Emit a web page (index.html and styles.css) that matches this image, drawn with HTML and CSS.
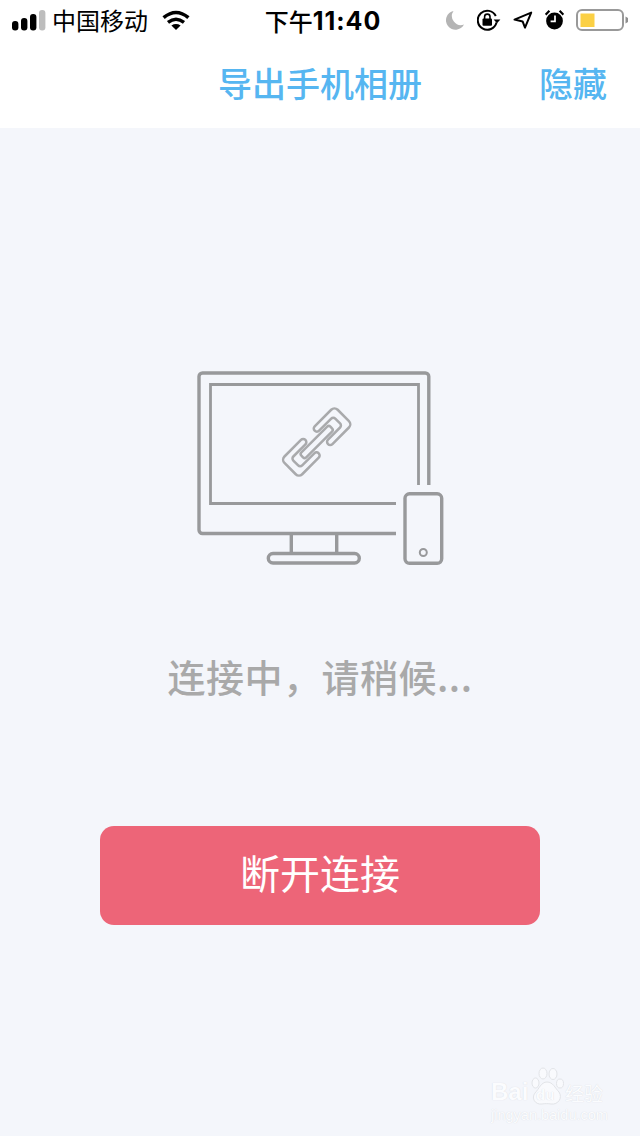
FILE: index.html
```html
<!DOCTYPE html>
<html lang="zh-CN">
<head>
<meta charset="utf-8">
<title>导出手机相册</title>
<link rel="stylesheet" href="styles.css">
</head>
<body>
<div class="screen">
  <header class="top">
    <div class="status">
      <div class="status-left">
        <svg class="ico-signal" width="34" height="21" viewBox="0 0 34 21">
          <rect x="0" y="11" width="6.4" height="9.500" rx="3" fill="#000"/>
          <rect x="9" y="8" width="6.4" height="12.500" rx="3" fill="#000"/>
          <rect x="18" y="4" width="6.4" height="16.500" rx="3" fill="#000"/>
          <rect x="27" y="0" width="6.4" height="20.500" rx="3" fill="#bdbdbd"/>
        </svg>
        <span class="carrier">中国移动</span>
        <svg class="ico-wifi" width="28" height="20" viewBox="0 0 28 20">
          <path d="M1.600 7.600Q14-2.600 26.400 7.600" fill="none" stroke="#000" stroke-width="3.600"/>
          <path d="M6 12.400Q14 6 22 12.400" fill="none" stroke="#000" stroke-width="3.400"/>
          <path d="M9.400 15.400Q14 12.600 18.600 15.400L14 20Z" fill="#000"/>
        </svg>
      </div>
      <div class="time"><span class="time-cjk">下午</span><span class="time-num">11:40</span></div>
      <div class="status-right">
        <svg width="19" height="20" viewBox="0 0 19 20">
          <path d="M7.500 1A9.500 9.500 0 1 0 18 14.500 9 9 0 0 1 7.500 1Z" fill="#b4b4b4"/>
        </svg>
        <svg width="24" height="22" viewBox="0 0 24 22">
          <path d="M19.500 13.500A9.500 9.500 0 1 1 18.800 7" fill="none" stroke="#000" stroke-width="2"/>
          <path d="M16.600 10.400h6.800l-3.400 3.800Z" fill="#000"/>
          <rect x="5.500" y="9.400" width="9.500" height="7.400" rx="1" fill="#000"/>
          <path d="M7.600 10V7.800a2.700 2.700 0 0 1 5.400 0V10" fill="none" stroke="#000" stroke-width="1.600"/>
        </svg>
        <svg width="20" height="18" viewBox="0 0 20 18">
          <path d="M1.500 8.600L18.200 1.600 12 16.600 9.600 10.400Z" fill="none" stroke="#000" stroke-width="2" stroke-linejoin="round"/>
        </svg>
        <svg width="19" height="20" viewBox="0 0 19 20">
          <circle cx="9.500" cy="11" r="8.400" fill="#000"/>
          <path d="M0.600 4.600L4.400 0.800M18.400 4.600L14.600 0.800" stroke="#000" stroke-width="2.200"/>
          <path d="M10 5.600V11.400H5.600" fill="none" stroke="#fff" stroke-width="1.700"/>
        </svg>
        <svg width="52" height="22" viewBox="0 0 52 22">
          <rect x="1" y="1" width="46" height="20" rx="5" fill="none" stroke="#999" stroke-width="2"/>
          <rect x="4.500" y="4.500" width="14" height="13.500" fill="#fbd044"/>
          <path d="M49.500 7.500L52 9V13L49.500 14.500Z" fill="#8f8f8f"/>
        </svg>
      </div>
    </div>
    <nav class="nav">
      <span></span>
      <h1 class="title">导出手机相册</h1>
      <a class="hide">隐藏</a>
    </nav>
  </header>
  <main class="main">
    <svg class="illus" width="248" height="196" viewBox="197 370 248 196">
      <g fill="none" stroke="#98999b" stroke-width="3.400">
        <path d="M428.800 485V376.500a3.500 3.500 0 0 0-3.500-3.500H202.500a3.500 3.500 0 0 0-3.500 3.500V530a3.500 3.500 0 0 0 3.500 3.500H396"/>
        <path d="M418.500 485V384.500H210.500V503.500H396" stroke-width="2.800"/>
        <path d="M291.300 534V552M336.700 534V552"/>
        <rect x="268.300" y="553.500" width="91" height="9.500" rx="4.700"/>
        <rect x="405" y="493.800" width="36.700" height="69.500" rx="4.500"/>
        <circle cx="423.300" cy="552.500" r="3.500" stroke-width="2"/>
      </g>
      <g transform="translate(316.700 442) rotate(-45) scale(1.140)" fill="none" stroke="#a9aaac" stroke-width="2.200">
        <path d="M8.500-11H29a4 4 0 0 1 4 4V7a4 4 0 0 1-4 4H8.500a2.700 2.700 0 0 1 0-5.500H23.500a2.500 2.500 0 0 0 2.500-2.500V-3a2.500 2.500 0 0 0-2.500-2.500H8.500a2.700 2.700 0 0 1 0-5.500Z"/>
        <path d="M-8.500 11H-29a4 4 0 0 1-4-4V-7a4 4 0 0 1 4-4H-8.500a2.700 2.700 0 0 1 0 5.500H-23.500a2.500 2.500 0 0 0-2.500 2.500V3a2.500 2.500 0 0 0 2.500 2.500H-8.500a2.700 2.700 0 0 1 0 5.500Z"/>
        <rect x="-18" y="-3" width="36" height="6" rx="2"/>
      </g>
    </svg>
    <p class="hint">连接中，请稍候...</p>
    <button class="disconnect" type="button">断开连接</button>
  </main>
  <div class="watermark">
    <div class="wm-row">
      <span class="wm-bai">Bai</span>
      <span class="wm-paw">
        <svg width="34" height="40" viewBox="0 0 34 40">
          <g fill="#f9fafd" stroke="#e2e4e8" stroke-width="1">
            <ellipse cx="5.500" cy="16" rx="3.500" ry="5"/>
            <ellipse cx="13" cy="6.500" rx="4" ry="5.500"/>
            <ellipse cx="23" cy="7" rx="4" ry="5.500"/>
            <ellipse cx="30" cy="16.500" rx="3.500" ry="4.500"/>
            <path d="M17 15C23 15 25 21 29 25 33 31 28 38 21 37 18 36.500 15 36.500 12 37 5 38 1 31 5 26 9 22 11 15 17 15Z"/>
          </g>
        </svg>
        <span class="wm-du">du</span>
      </span>
      <span class="wm-jy">经验</span>
    </div>
    <div class="wm-url">jingyan.baidu.com</div>
  </div>
</div>
</body>
</html>
```
FILE: styles.css
```css
* { box-sizing: border-box; }
html, body { margin: 0; padding: 0; }
body { font-family: "Noto Sans CJK SC", "Noto Sans", sans-serif; background: #f4f6fb; }
.screen { position: relative; width: 640px; height: 1136px; overflow: hidden; background: #f4f6fb; }
.top { background: #fff; height: 128px; }
.status { display: grid; grid-template-columns: 1fr auto 1fr; align-items: center; height: 40px; color: #000; }
.status-left { display: flex; align-items: center; padding-left: 12px; }
.carrier { font-size: 24px; line-height: 30px; margin-left: 6px; }
.ico-wifi { margin-left: 14px; }
.time { display: flex; align-items: center; padding-top: 1px; padding-left: 6px; line-height: 30px; }
.time-cjk { font-size: 24px; font-weight: 500; }
.time-num { font-family: "Inter", "Liberation Sans", sans-serif; font-size: 25px; font-weight: 700; letter-spacing: 1px; }
.status-right { display: flex; align-items: center; justify-content: flex-end; gap: 12px; padding-right: 12px; }
.nav { display: grid; grid-template-columns: 1fr auto 1fr; align-items: center; height: 85px; }
.title { margin: 0; font-size: 34px; font-weight: 500; line-height: 44px; color: #56b6f1; }
.hide { justify-self: end; padding-right: 33px; font-size: 34px; font-weight: 500; line-height: 44px; color: #56b6f1; }
.main { display: flex; flex-direction: column; align-items: center; padding-top: 242px; }
.illus { display: block; margin-left: 2px; }
.hint { margin: 86px 0 0; font-size: 38px; font-weight: 500; line-height: 48px; letter-spacing: 0.5px; color: #a9a9a9; white-space: nowrap; }
.disconnect { display: block; width: 440px; height: 99px; margin-top: 126px; padding: 0 0 8px; border: 0; border-radius: 14px; background: #ed6578; color: #fff; font-family: inherit; font-size: 40px; font-weight: 400; line-height: 56px; }
.watermark { position: absolute; left: 491px; top: 1066px; width: 120px; color: #fbfcfe; text-shadow: 0 0 1px #d4d6dc; }
.wm-row { display: flex; align-items: flex-end; height: 41px; }
.wm-bai { font-family: "Liberation Sans", sans-serif; font-size: 24px; font-weight: 700; line-height: 30px; width: 39px; }
.wm-paw { position: relative; display: block; width: 34px; height: 40px; }
.wm-paw svg { display: block; }
.wm-du { position: absolute; left: 6px; top: 18px; font-family: "Liberation Sans", sans-serif; font-size: 15px; font-weight: 700; line-height: 20px; }
.wm-jy { font-size: 19px; line-height: 26px; margin-left: 1px; white-space: nowrap; padding-bottom: 1px; }
.wm-url { font-family: "Liberation Sans", sans-serif; font-size: 14.500px; line-height: 16px; white-space: nowrap; }
```
